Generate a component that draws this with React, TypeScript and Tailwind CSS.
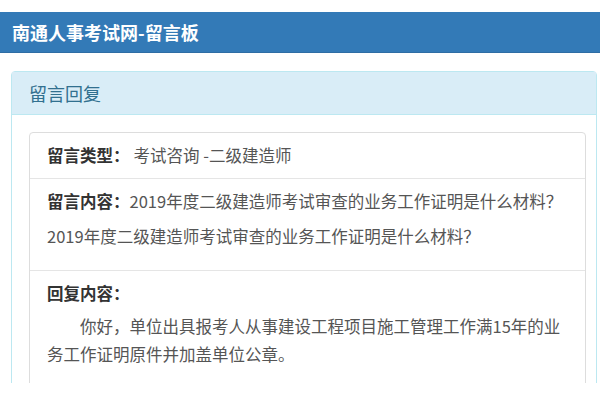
import React from 'react';

const font = { fontFamily: '"Noto Sans CJK SC", "Noto Sans", sans-serif' };

export default function App() {
  return (
    <div className="w-[600px] h-[400px] bg-white overflow-hidden" style={font} lang="zh-CN">
      <div className="h-[383px] overflow-hidden pt-[12px]">
        {/* Site header */}
        <div className="h-[41px] bg-[#337ab7] border-b border-[#2e6da4] pl-[12px] flex items-center">
          <h1 className="text-white font-bold text-[18px]">南通人事考试网-留言板</h1>
        </div>

        {/* Panel */}
        <div className="mt-[18px] ml-[11px] mr-[3px] border border-[#bce8f1] rounded-t-[4px] h-[400px]">
          <div className="h-[43px] bg-[#d9edf7] border-b border-[#bce8f1] px-[17px] flex items-center">
            <h2 className="text-[18px] text-[#31708f]">留言回复</h2>
          </div>

          <div className="pt-[17px] pl-[17px] pr-[10px]">
            <div className="border border-[#ddd] rounded-t-[4px] text-[16.5px] text-[#555] h-[300px]">
              <div className="h-[46px] px-[17px] flex items-center border-b border-[#e5e5e5]">
                <span className="font-bold text-[#333]">留言类型：</span>
                <span className="ml-[4px]">考试咨询 -二级建造师</span>
              </div>

              <div className="px-[17px] pt-[8px] pb-[20px] border-b border-[#e5e5e5]">
                <p className="leading-[28px]">
                  <span className="font-bold text-[#333]">留言内容：</span>2019年度二级建造师考试审查的业务工作证明是什么材料？
                </p>
                <p className="leading-[28px] mt-[7px]">2019年度二级建造师考试审查的业务工作证明是什么材料？</p>
              </div>

              <div className="px-[17px] pt-[8px]">
                <p className="leading-[28px] font-bold text-[#333]">回复内容：</p>
                <p className="leading-[28px] mt-[5px] indent-[2em]">
                  你好，单位出具报考人从事建设工程项目施工管理工作满15年的业务工作证明原件并加盖单位公章。
                </p>
              </div>
            </div>
          </div>
        </div>
      </div>
    </div>
  );
}
